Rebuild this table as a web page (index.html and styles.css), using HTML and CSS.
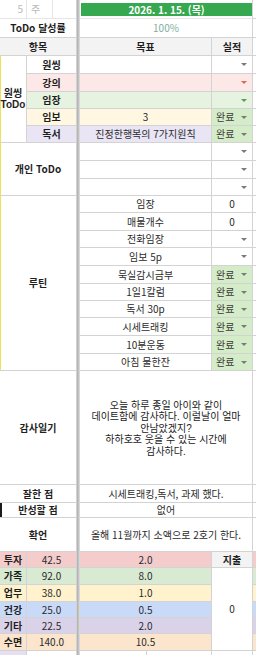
FILE: index.html
```html
<!DOCTYPE html>
<html lang="ko">
<head>
<meta charset="utf-8">
<title>Daily sheet</title>
<link rel="stylesheet" href="styles.css">
</head>
<body>
<div class="sheet">
  <div class="freeze"></div>

  <!-- row 1 -->
  <div class="cell week-num">5</div>
  <div class="cell week-lbl">주</div>
  <div class="cell"></div>
  <div class="cell c3 date-cell"><div class="date">2026. 1. 15. (목)</div></div>
  <div class="cell edge"></div>

  <!-- row 2 -->
  <div class="cell c3 b">ToDo 달성률</div>
  <div class="cell c3 pct">100%</div>
  <div class="cell edge"></div>

  <!-- row 3 -->
  <div class="cell c3 b head">항목</div>
  <div class="cell c2 b head">목표</div>
  <div class="cell b head">실적</div>
  <div class="cell edge"></div>

  <!-- row 4-8 -->
  <div class="cell r5 b mark two"><span class="line">원씽</span><span class="line">ToDo</span></div>
  <div class="cell c2 b">원씽</div>
  <div class="cell c2"></div>
  <div class="cell dd"><span></span><i class="arr"></i></div>
  <div class="cell edge"></div>

  <div class="cell c2 b pink">강의</div>
  <div class="cell c2 pink"></div>
  <div class="cell dd pink"><span></span><i class="arr red"></i></div>
  <div class="cell edge"></div>

  <div class="cell c2 b green">임장</div>
  <div class="cell c2 green"></div>
  <div class="cell dd green"><span></span><i class="arr grn"></i></div>
  <div class="cell edge"></div>

  <div class="cell c2 b yellow">임보</div>
  <div class="cell c2 yellow">3</div>
  <div class="cell dd done"><span>완료</span><i class="arr"></i></div>
  <div class="cell edge"></div>

  <div class="cell c2 b purple">독서</div>
  <div class="cell c2 purple">진정한행복의 7가지원칙</div>
  <div class="cell dd done"><span>완료</span><i class="arr"></i></div>
  <div class="cell edge"></div>

  <!-- row 9-11 -->
  <div class="cell c3 r3 b mark">개인 ToDo</div>
  <div class="cell c2"></div>
  <div class="cell dd"><span></span><i class="arr"></i></div>
  <div class="cell edge"></div>
  <div class="cell c2"></div>
  <div class="cell dd"><span></span><i class="arr"></i></div>
  <div class="cell edge"></div>
  <div class="cell c2"></div>
  <div class="cell dd"><span></span><i class="arr"></i></div>
  <div class="cell edge"></div>

  <!-- row 12-21 -->
  <div class="cell c3 r10 b mark">루틴</div>
  <div class="cell c2">임장</div>
  <div class="cell">0</div>
  <div class="cell edge"></div>
  <div class="cell c2">매물개수</div>
  <div class="cell">0</div>
  <div class="cell edge"></div>
  <div class="cell c2">전화임장</div>
  <div class="cell dd"><span></span><i class="arr"></i></div>
  <div class="cell edge"></div>
  <div class="cell c2">임보 5p</div>
  <div class="cell dd"><span></span><i class="arr"></i></div>
  <div class="cell edge"></div>
  <div class="cell c2">묵실감시금부</div>
  <div class="cell dd done"><span>완료</span><i class="arr"></i></div>
  <div class="cell edge"></div>
  <div class="cell c2">1일1칼럼</div>
  <div class="cell dd done"><span>완료</span><i class="arr"></i></div>
  <div class="cell edge"></div>
  <div class="cell c2">독서 30p</div>
  <div class="cell dd done"><span>완료</span><i class="arr"></i></div>
  <div class="cell edge"></div>
  <div class="cell c2">시세트래킹</div>
  <div class="cell dd done"><span>완료</span><i class="arr"></i></div>
  <div class="cell edge"></div>
  <div class="cell c2">10분운동</div>
  <div class="cell dd done"><span>완료</span><i class="arr"></i></div>
  <div class="cell edge"></div>
  <div class="cell c2">아침 물한잔</div>
  <div class="cell dd done"><span>완료</span><i class="arr"></i></div>
  <div class="cell edge"></div>

  <!-- row 22-25 -->
  <div class="cell c3 b">감사일기</div>
  <div class="cell c3 diary">
    <span class="line">오늘 하루 종일 아이와 같이</span>
    <span class="line">데이트함에 감사하다. 이럴날이 얼마</span>
    <span class="line">안남았겠지?</span>
    <span class="line">하하호호 웃을 수 있는 시간에</span>
    <span class="line">감사하다.</span>
  </div>
  <div class="cell edge"></div>

  <div class="cell c3 b">잘한 점</div>
  <div class="cell c3">시세트래킹,독서, 과제 했다.</div>
  <div class="cell edge"></div>

  <div class="cell c3 b black-edge">반성할 점</div>
  <div class="cell c3">없어</div>
  <div class="cell edge"></div>

  <div class="cell c3 b">확언</div>
  <div class="cell c3">올해 11월까지 소액으로 2호기 한다.</div>
  <div class="cell edge"></div>

  <!-- row 26-31 -->
  <div class="cell b t-pink">투자</div>
  <div class="cell c2 t-pink">42.5</div>
  <div class="cell c2 t-pink">2.0</div>
  <div class="cell b head">지출</div>
  <div class="cell edge t-pink"></div>

  <div class="cell b t-green">가족</div>
  <div class="cell c2 t-green">92.0</div>
  <div class="cell c2 t-green">8.0</div>
  <div class="cell r5">0</div>
  <div class="cell edge t-green"></div>

  <div class="cell b t-yellow">업무</div>
  <div class="cell c2 t-yellow">38.0</div>
  <div class="cell c2 t-yellow">1.0</div>
  <div class="cell edge t-yellow"></div>

  <div class="cell b t-blue">건강</div>
  <div class="cell c2 t-blue">25.0</div>
  <div class="cell c2 t-blue">0.5</div>
  <div class="cell edge t-blue"></div>

  <div class="cell b t-purple">기타</div>
  <div class="cell c2 t-purple">22.5</div>
  <div class="cell c2 t-purple">2.0</div>
  <div class="cell edge t-purple"></div>

  <div class="cell b t-orange">수면</div>
  <div class="cell c2 t-orange">140.0</div>
  <div class="cell c2 t-orange">10.5</div>
  <div class="cell edge t-orange"></div>

  <!-- row 32 -->
  <div class="cell t-lilac"></div>
  <div class="cell c2"></div>
  <div class="cell"></div>
  <div class="cell"></div>
  <div class="cell"></div>
  <div class="cell edge"></div>
</div>
</body>
</html>
```

FILE: styles.css
```css
html, body {
  margin: 0;
  padding: 0;
  background: #ffffff;
  overflow: hidden;
}

body {
  width: 256px;
  height: 655px;
  font-family: "Noto Sans CJK KR", "Noto Sans", "Liberation Sans", sans-serif;
  font-size: 10px;
  color: #2b2b2b;
}

.sheet {
  display: grid;
  grid-template-columns: 27px 26px 24px 3px 67px 65px 41px 3px;
  grid-template-rows:
    19px 19px 18px
    18px 18px 17px 17px 17px
    18px 18px 17px
    17px 18px 17px 18px 18px 17px 17px 18px 18px 17px
    114px 18px 15px 34px
    16px 17px 17px 16px 16px 17px 20px;
  width: 256px;
}

.freeze {
  grid-column: 4;
  grid-row: 1 / -1;
  background: #c3c3c3;
  border-left: 1px solid #b5b5b5;
  border-right: 1px solid #d8d8d8;
}

.cell {
  box-sizing: border-box;
  border-right: 1px solid #d3d3d3;
  border-bottom: 1px solid #d3d3d3;
  display: flex;
  align-items: center;
  justify-content: center;
  text-align: center;
  white-space: nowrap;
  line-height: 1;
  overflow: hidden;
}

.c2 { grid-column: span 2; }
.c3 { grid-column: span 3; }
.r3 { grid-row: span 3; }
.r5 { grid-row: span 5; }
.r10 { grid-row: span 10; }

.b { font-weight: 700; color: #1f1f1f; }

.week-num {
  justify-content: flex-end;
  padding-right: 3px;
  color: #b8b8b8;
  border-right-color: #e6e6e6;
  border-bottom-color: #e6e6e6;
}
.week-lbl {
  justify-content: flex-start;
  padding-left: 4px;
  color: #b8b8b8;
  border-right-color: #e6e6e6;
  border-bottom-color: #e6e6e6;
}
.week-lbl + .cell { border-bottom-color: #e6e6e6; }

.date-cell {
  align-items: stretch;
  padding: 3px 0 2px 1px;
  border-bottom-color: #e6e6e6;
}
.date {
  flex: 1;
  background: #36a84f;
  color: #ffffff;
  font-weight: 700;
  display: flex;
  align-items: center;
  justify-content: center;
}

.pct { color: #7fae9f; }

.head { background: #f3f3f3; }

.mark { box-shadow: inset 1px 0 0 #f1e05a; }
.two {
  flex-direction: column;
}
.line {
  display: block;
  height: 11.5px;
  line-height: 11.5px;
  font-family: "Liberation Sans", "Noto Sans CJK KR", sans-serif;
}
.black-edge { box-shadow: inset 2px 0 0 #1a1a1a; }

.edge { border-right: none; }

.pink { background: #fce8e6; }
.green { background: #e7f3e1; }
.yellow { background: #fff7e1; }
.purple { background: #e9e5f5; }
.done { background: #d5ecc9; }

.dd {
  justify-content: space-between;
  padding: 0 5px 0 4px;
}
.dd span { color: #3a3a3a; }

.arr {
  width: 0;
  height: 0;
  border-left: 3px solid transparent;
  border-right: 3px solid transparent;
  border-top: 3px solid #7a7a7a;
}
.arr.red { border-top-color: #e0674a; }
.arr.grn { border-top-color: #5e9a55; }

.diary {
  flex-direction: column;
  color: #222;
  padding-top: 2px;
}

.t-pink { background: #f4cccc; }
.t-green { background: #d9ead3; }
.t-yellow { background: #fff2cc; }
.t-blue { background: #c9daf8; }
.t-purple { background: #d9d2e9; }
.t-orange { background: #fce5cd; }
.t-lilac { background: #e4e0f2; }
```
